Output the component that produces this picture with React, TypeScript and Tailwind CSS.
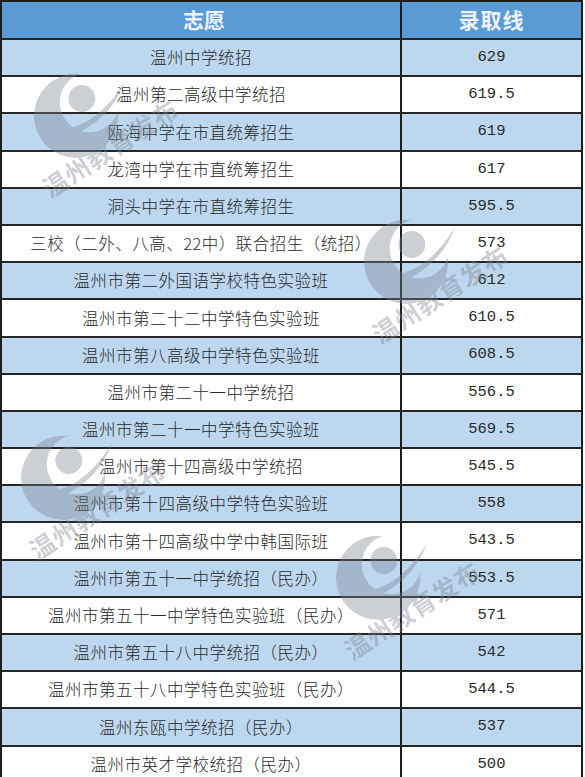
import React from 'react';

const rows: [string, string][] = [
  ['温州中学统招', '629'],
  ['温州第二高级中学统招', '619.5'],
  ['瓯海中学在市直统筹招生', '619'],
  ['龙湾中学在市直统筹招生', '617'],
  ['洞头中学在市直统筹招生', '595.5'],
  ['三校（二外、八高、22中）联合招生（统招）', '573'],
  ['温州市第二外国语学校特色实验班', '612'],
  ['温州市第二十二中学特色实验班', '610.5'],
  ['温州市第八高级中学特色实验班', '608.5'],
  ['温州市第二十一中学统招', '556.5'],
  ['温州市第二十一中学特色实验班', '569.5'],
  ['温州市第十四高级中学统招', '545.5'],
  ['温州市第十四高级中学特色实验班', '558'],
  ['温州市第十四高级中学中韩国际班', '543.5'],
  ['温州市第五十一中学统招（民办）', '553.5'],
  ['温州市第五十一中学特色实验班（民办）', '571'],
  ['温州市第五十八中学统招（民办）', '542'],
  ['温州市第五十八中学特色实验班（民办）', '544.5'],
  ['温州东瓯中学统招（民办）', '537'],
  ['温州市英才学校统招（民办）', '500'],
];

// faint "温州教育发布" stamp: crescent logo + slanted caption
const Watermark = ({ id, className }: { id: string; className: string }) => (
  <div className={`absolute h-[150px] w-[190px] ${className}`}>
    <svg viewBox="0 0 100 100" className="h-[96px] w-[96px]" aria-hidden="true">
      <defs>
        <mask id={id}>
          <circle cx="48" cy="54" r="44" fill="white" />
          <circle cx="62" cy="40" r="31" fill="black" />
        </mask>
      </defs>
      <circle cx="48" cy="54" r="44" fill="#7c8690" mask={`url(#${id})`} />
      <circle cx="54" cy="36" r="14" fill="#7c8690" />
      <path d="M44 66 Q74 58 99 18 Q86 54 50 72 Z" fill="#7c8690" />
    </svg>
    <span className="absolute left-[80px] top-[84px] -translate-x-1/2 -translate-y-1/2 rotate-[-33deg] whitespace-nowrap text-[25px] font-bold tracking-[1px] text-[#7c8690]">
      温州教育发布
    </span>
  </div>
);

export default function App() {
  return (
    <div className="relative h-[777px] w-[585px] overflow-hidden bg-white font-['Noto_Sans_CJK_SC','Noto_Sans',sans-serif] text-[#2a2a2a]">
      <div className="w-[583px] border-x-2 border-t-2 border-[#1d1d1d]">
        <div className="flex h-[36px] bg-[#5b9bd5] text-[21px] font-bold text-[#eef4fb]">
          <div className="flex w-[400px] items-center justify-center border-r-2 border-[#1d1d1d] pl-[6px]">志愿</div>
          <div className="flex flex-1 items-center justify-center tracking-[1px]">录取线</div>
        </div>
        {rows.map(([name, score], i) => (
          <div
            key={name}
            className={`flex h-[37.2px] border-t-2 border-[#262626] ${i % 2 === 0 ? 'bg-[#bdd7ee]' : 'bg-white'}`}
          >
            <div className="flex w-[400px] items-center justify-center border-r-2 border-[#1d1d1d] text-[16.5px] font-light tracking-[0.5px]">
              {name}
            </div>
            <div className="flex flex-1 items-center justify-center font-['Liberation_Mono',monospace] text-[15.5px]">
              {score}
            </div>
          </div>
        ))}
      </div>

      <div className="pointer-events-none absolute inset-0 opacity-[0.38]">
        <Watermark id="wm1" className="left-[30px] top-[64px]" />
        <Watermark id="wm2" className="left-[360px] top-[210px]" />
        <Watermark id="wm3" className="left-[17px] top-[426px]" />
        <Watermark id="wm4" className="left-[332px] top-[526px]" />
      </div>
    </div>
  );
}
